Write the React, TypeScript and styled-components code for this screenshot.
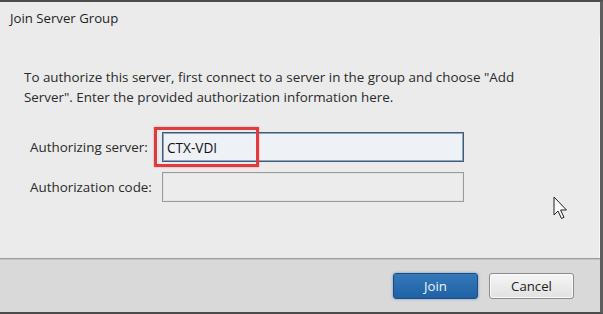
import React from 'react'
import styled, { createGlobalStyle } from 'styled-components'

const GlobalStyle = createGlobalStyle`
  html, body {
    margin: 0;
    padding: 0;
    background: #ebebeb;
  }
  body {
    font-family: 'Open Sans', 'Noto Sans', 'Liberation Sans', sans-serif;
    color: #222;
  }
`

const Dialog = styled.div`
  position: relative;
  width: 603px;
  height: 314px;
  box-sizing: border-box;
  border-top: 2px solid #4b4b4b;
  border-right: 3px solid #5e5e5e;
  border-bottom: 2px solid #4b4b4b;
  background: #ebebeb;
  display: flex;
  flex-direction: column;
`

const Title = styled.div`
  height: 34px;
  padding: 7px 0 0 10px;
  box-sizing: border-box;
  font-size: 13.2px;
  color: #1e1e1e;
`

const Body = styled.div`
  flex: 1;
  padding: 31px 0 0 24px;
  border-right: 1px solid #f7f7f7;
`

const Intro = styled.p`
  margin: 0;
  font-size: 13.4px;
  line-height: 20px;
  color: #2a2a2a;
  white-space: nowrap;
`

const Form = styled.div`
  margin-top: 25px;
  padding-left: 6px;
  display: grid;
  grid-template-columns: 132px 302px;
  row-gap: 10px;
  align-items: center;
`

const Label = styled.label`
  font-size: 13.4px;
  color: #2a2a2a;
`

const FieldWrap = styled.div`
  position: relative;
`

const Field = styled.div<{ $active?: boolean }>`
  height: 30px;
  box-sizing: border-box;
  border: 1px solid ${({ $active }) => ($active ? '#3f5b78' : '#9a9a9a')};
  box-shadow: ${({ $active }) => ($active ? 'inset 0 0 0 1px #8fa6bf' : 'inset 0 0 0 1px #e4e4e4')};
  background: ${({ $active }) => ($active ? '#eef2f6' : '#ececec')};
  padding: 0 4px;
  display: flex;
  align-items: center;
  font-size: 13.6px;
  color: #111;
`

const Highlight = styled.div`
  position: absolute;
  left: -8px;
  top: -5px;
  width: 105px;
  height: 40px;
  box-sizing: border-box;
  border: 3px solid #e2393c;
  box-shadow: 0 0 2px rgba(200, 40, 40, 0.4);
`

const Footer = styled.div`
  height: 54px;
  box-sizing: border-box;
  border-top: 1px solid #9c9c9c;
  box-shadow: inset 0 1px 0 #c4c4c4;
  background: #d9d9d9;
  display: flex;
  justify-content: flex-end;
  align-items: flex-start;
  padding: 14px 26px 0 0;
  gap: 11px;
`

const Button = styled.button<{ $primary?: boolean }>`
  width: 85px;
  height: 26px;
  border-radius: 3px;
  font-family: inherit;
  font-size: 13.2px;
  padding: 0;
  border: 1px solid ${({ $primary }) => ($primary ? '#1b4c85' : '#8c8c8c')};
  color: ${({ $primary }) => ($primary ? '#eef4fb' : '#222')};
  background: ${({ $primary }) =>
    $primary
      ? 'linear-gradient(#3579bb, #1f61a4)'
      : 'linear-gradient(#f6f6f6, #e1e1e1)'};
  box-shadow: ${({ $primary }) =>
    $primary ? '0 0 3px rgba(40, 100, 170, 0.6)' : 'inset 0 0 0 1px #fafafa'};
`

const Pointer = styled.svg`
  position: absolute;
  left: 553px;
  top: 194px;
`

export default function App() {
  return (
    <>
      <GlobalStyle />
      <Dialog>
        <Title>Join Server Group</Title>
        <Body>
          <Intro>
            To authorize this server, first connect to a server in the group and choose "Add
            <br />
            Server". Enter the provided authorization information here.
          </Intro>
          <Form>
            <Label>Authorizing server:</Label>
            <FieldWrap>
              <Field $active>CTX-VDI</Field>
              <Highlight />
            </FieldWrap>
            <Label>Authorization code:</Label>
            <FieldWrap>
              <Field />
            </FieldWrap>
          </Form>
        </Body>
        <Footer>
          <Button $primary>Join</Button>
          <Button>Cancel</Button>
        </Footer>
        <Pointer width="16" height="26" viewBox="0 0 16 26">
          <path
            d="M1 1 L1 19 L5 15 L8.5 22.5 L11 21.3 L7.6 14 L13.5 14 Z"
            fill="#fafafa"
            stroke="#222"
            strokeWidth="1"
            strokeLinejoin="miter"
          />
        </Pointer>
      </Dialog>
    </>
  )
}
